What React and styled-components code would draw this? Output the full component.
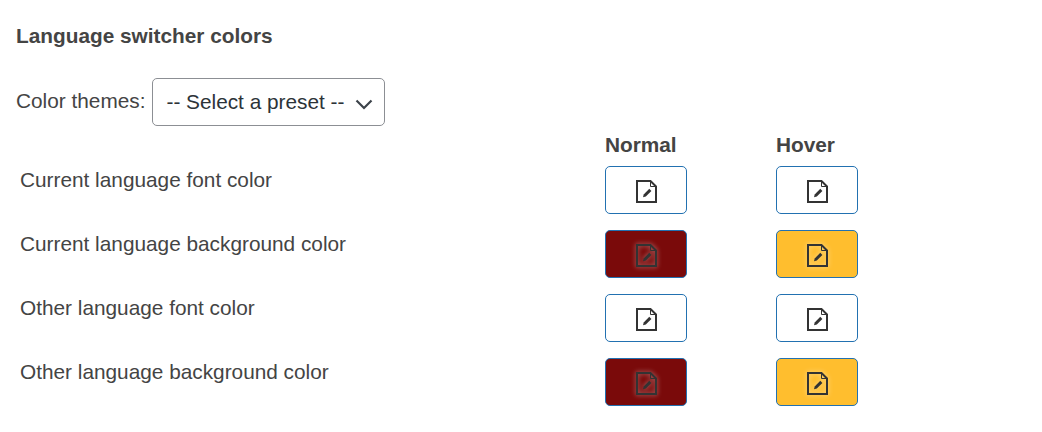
import React from "react";
import styled, { createGlobalStyle } from "styled-components";

const GlobalStyle = createGlobalStyle`
  html, body {
    margin: 0;
    background: #fff;
    font-family: "Liberation Sans", Arial, sans-serif;
    color: #444;
  }
`;

const Page = styled.div`
  width: 1042px;
  height: 432px;
  padding: 25px 0 0 16px;
  box-sizing: border-box;
`;

const Title = styled.h3`
  margin: 0 0 31px;
  font-size: 20.8px;
  line-height: 22px;
  font-weight: 700;
  color: #444;
`;

const ThemeRow = styled.div`
  display: flex;
  align-items: center;
  gap: 7px;
  height: 48px;
`;

const ThemeLabel = styled.label`
  font-size: 20.8px;
  position: relative;
  top: -1px;
`;

const SelectWrap = styled.div`
  position: relative;
  width: 233px;
  height: 48px;
`;

const Select = styled.select`
  appearance: none;
  width: 100%;
  height: 100%;
  padding: 0 13px 2px;
  border: 1px solid #8c8f94;
  border-radius: 5px;
  background: #fff;
  font-family: inherit;
  font-size: 20.8px;
  color: #2c3338;
`;

const Chevron = styled.svg`
  position: absolute;
  right: 12px;
  top: 20px;
  width: 18px;
  height: 12px;
  color: #3c434a;
  pointer-events: none;
`;

const Header = styled.div`
  display: grid;
  grid-template-columns: 589px 171px 82px;
  height: 40px;
  padding-top: 7px;
  box-sizing: border-box;
`;

const HeadCell = styled.div`
  font-weight: 700;
  font-size: 20.8px;
  line-height: 24px;
`;

const ColorTable = styled.div`
  display: grid;
  grid-template-columns: 589px 171px 82px;
  grid-auto-rows: 64px;
`;

const RowLabel = styled.div`
  padding: 2px 0 0 4px;
  line-height: 24px;
  font-size: 20.8px;
`;

const Swatch = styled.button`
  display: flex;
  align-items: center;
  justify-content: center;
  width: 82px;
  height: 48px;
  padding: 2px 0 0;
  box-sizing: border-box;
  border: 1px solid #2271b1;
  border-radius: 5px;
  background: ${(p) => p.$color};
`;

const FileIcon = styled.svg`
  width: 23px;
  height: 25px;
  color: #333;
  filter: ${(p) => (p.$glow ? "drop-shadow(0 0 2.5px rgba(255,255,255,.5))" : "none")};
`;

function EditIcon({ glow }) {
  return (
    <FileIcon $glow={glow} viewBox="0 0 23 25" fill="none">
      <path d="M2 2h13.5L21 7.5V23H2z" stroke="currentColor" strokeWidth="2" />
      <path d="M15.5 2.5V7.5h5" stroke="currentColor" strokeWidth="1" />
      <path d="M8 18.2l.7-2.8 5.6-5.6 2.1 2.1-5.6 5.6z" fill="currentColor" />
    </FileIcon>
  );
}

const rows = [
  { label: "Current language font color", normal: "#fff", hover: "#fff" },
  { label: "Current language background color", normal: "#7a0a0a", hover: "#ffbe2e", glow: true },
  { label: "Other language font color", normal: "#fff", hover: "#fff" },
  { label: "Other language background color", normal: "#7a0a0a", hover: "#ffbe2e", glow: true },
];

export default function App() {
  return (
    <>
      <GlobalStyle />
      <Page>
        <Title>Language switcher colors</Title>
        <ThemeRow>
          <ThemeLabel>Color themes:</ThemeLabel>
          <SelectWrap>
            <Select defaultValue="">
              <option value="">-- Select a preset --</option>
            </Select>
            <Chevron viewBox="0 0 18 12" fill="none">
              <path d="M1.5 2.5l7.5 7.5 7.5-7.5" stroke="currentColor" strokeWidth="2.2" />
            </Chevron>
          </SelectWrap>
        </ThemeRow>
        <Header>
          <span />
          <HeadCell>Normal</HeadCell>
          <HeadCell>Hover</HeadCell>
        </Header>
        <ColorTable>
          {rows.map((r) => (
            <React.Fragment key={r.label}>
              <RowLabel>{r.label}</RowLabel>
              <Swatch $color={r.normal}>
                <EditIcon glow={r.glow} />
              </Swatch>
              <Swatch $color={r.hover}>
                <EditIcon glow={r.glow} />
              </Swatch>
            </React.Fragment>
          ))}
        </ColorTable>
      </Page>
    </>
  );
}
